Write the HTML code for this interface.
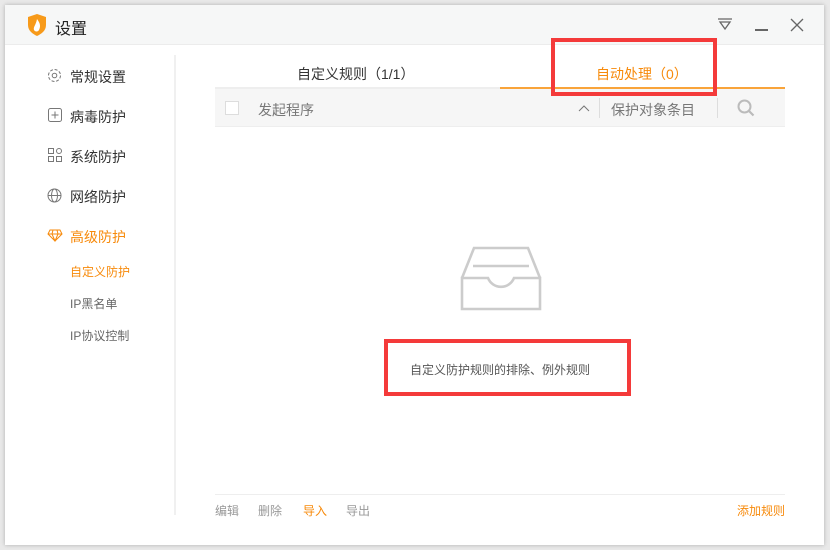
<!DOCTYPE html><html><head><meta charset="utf-8"><style>
body{margin:0;width:830px;height:550px;background:#e9e9e9;position:relative;overflow:hidden;font-family:"Liberation Sans","Noto Sans CJK SC",sans-serif;}
.win{position:absolute;left:5px;top:5px;width:819px;height:540px;background:#fff;box-shadow:0 0 4px rgba(0,0,0,.25);}
.tb{position:absolute;left:0;top:0;width:100%;height:39px;background:#f6f7f7;border-bottom:1px solid #ececec;}
.a{position:absolute;white-space:nowrap;}
.nav{font-size:14px;color:#333;}
.sub{font-size:12px;color:#666;}
.or{color:#f78a0b;}
.rb{position:absolute;border:4px solid #f43a3a;box-sizing:border-box;}
</style></head><body>
<div class="win">
<div class="tb"></div>
</div>
<svg class="a" style="left:26px;top:13px" width="22" height="24" viewBox="0 0 22 24"><path d="M11 1 L20 4 V12 C20 18 15 21 11 23 C7 21 2 18 2 12 V4 Z" fill="#f79a1a"/><path d="M11 6 C14 10 15 13 13 17 C12 19 9 19 8 17 C7 14 10 12 11 6Z" fill="#fff"/></svg>
<div class="a" style="left:55px;top:15px;font-size:16px;color:#222">设置</div>
<svg class="a" style="left:717px;top:17px" width="16" height="14"><path d="M1 2H15M3 5H13L8 12Z" stroke="#666" stroke-width="1.3" fill="none"/></svg>
<div class="a" style="left:755px;top:29px;width:13px;height:1.5px;background:#666"></div>
<svg class="a" style="left:790px;top:18px" width="14" height="14"><path d="M1 1L13 13M13 1L1 13" stroke="#666" stroke-width="1.3"/></svg>
<div class="a" style="left:174px;top:55px;width:2px;height:460px;background:#f0f0f0"></div>
<svg class="a" style="left:47px;top:68px" width="15" height="15"><circle cx="7.5" cy="7.5" r="2.3" stroke="#777" fill="none"/><circle cx="7.5" cy="7.5" r="6" stroke="#777" fill="none" stroke-dasharray="3 1.7"/></svg>
<div class="a nav" style="left:70px;top:67px">常规设置</div>
<svg class="a" style="left:48px;top:108px" width="14" height="14"><rect x=".5" y=".5" width="13" height="13" rx="2" stroke="#777" fill="none"/><path d="M7 3.5V10.5M3.5 7H10.5" stroke="#777"/></svg>
<div class="a nav" style="left:70px;top:107px">病毒防护</div>
<svg class="a" style="left:48px;top:148px" width="14" height="14"><rect x=".5" y=".5" width="5" height="5" stroke="#777" fill="none"/><rect x=".5" y="8.5" width="5" height="5" stroke="#777" fill="none"/><rect x="8.5" y="8.5" width="5" height="5" stroke="#777" fill="none"/><circle cx="11" cy="3" r="2.5" stroke="#777" fill="none"/></svg>
<div class="a nav" style="left:70px;top:147px">系统防护</div>
<svg class="a" style="left:47px;top:188px" width="15" height="15"><circle cx="7.5" cy="7.5" r="6.5" stroke="#777" fill="none"/><ellipse cx="7.5" cy="7.5" rx="3" ry="6.5" stroke="#777" fill="none"/><path d="M1 7.5H14" stroke="#777"/></svg>
<div class="a nav" style="left:70px;top:187px">网络防护</div>
<svg class="a" style="left:47px;top:229px" width="16" height="13"><path d="M3 1H13L15 5L8 12L1 5Z M1 5H15 M6 1L5 5L8 12L11 5L10 1" stroke="#f78a0b" fill="none"/></svg>
<div class="a nav or" style="left:70px;top:227px">高级防护</div>
<div class="a sub or" style="left:70px;top:263px">自定义防护</div>
<div class="a sub" style="left:70px;top:295px">IP黑名单</div>
<div class="a sub" style="left:70px;top:327px">IP协议控制</div>
<div class="a" style="left:297px;top:64px;font-size:14px;color:#333">自定义规则（1/1）</div>
<div class="a" style="left:596px;top:64px;font-size:14px;color:#f78a0b">自动处理（0）</div>
<div class="a" style="left:215px;top:87px;width:285px;height:2px;background:#eee"></div>
<div class="a" style="left:500px;top:87px;width:285px;height:2px;background:#f9a43a"></div>
<div class="a" style="left:215px;top:89px;width:570px;height:37px;background:#f6f6f6;border-bottom:1px solid #eee"></div>
<div class="a" style="left:225px;top:101px;width:12px;height:12px;border:1px solid #ddd;background:#fff"></div>
<div class="a" style="left:258px;top:100px;font-size:14px;color:#777">发起程序</div>
<svg class="a" style="left:578px;top:104px" width="12" height="8"><path d="M1 7L6 2L11 7" stroke="#777" fill="none"/></svg>
<div class="a" style="left:599px;top:98px;width:1px;height:20px;background:#ddd"></div>
<div class="a" style="left:611px;top:100px;font-size:14px;color:#777">保护对象条目</div>
<div class="a" style="left:717px;top:98px;width:1px;height:20px;background:#ddd"></div>
<svg class="a" style="left:737px;top:99px" width="18" height="18"><circle cx="7.5" cy="7.5" r="6" stroke="#bbb" stroke-width="2" fill="none"/><path d="M12 12L16.5 16.5" stroke="#bbb" stroke-width="2.2"/></svg>
<svg class="a" style="left:458px;top:244px" width="86" height="68"><g stroke="#ccc" stroke-width="2.6" fill="none"><path d="M4 34L16 4H70L82 34"/><path d="M15 22H71"/><path d="M4 34V65H82V34H56A14 14 0 0 1 30 34Z"/></g></svg>
<div class="a" style="left:410px;top:361px;font-size:12px;color:#555">自定义防护规则的排除、例外规则</div>
<div class="a" style="left:215px;top:494px;width:570px;height:1px;background:#eee"></div>
<div class="a" style="left:215px;top:502px;font-size:12px;color:#999">编辑</div>
<div class="a" style="left:258px;top:502px;font-size:12px;color:#999">删除</div>
<div class="a" style="left:303px;top:502px;font-size:12px;color:#f78a0b">导入</div>
<div class="a" style="left:346px;top:502px;font-size:12px;color:#999">导出</div>
<div class="a" style="left:737px;top:502px;font-size:12px;color:#f78a0b">添加规则</div>
<div class="rb" style="left:551px;top:38px;width:166px;height:58px"></div>
<div class="rb" style="left:384px;top:339px;width:247px;height:57px"></div>
</body></html>
